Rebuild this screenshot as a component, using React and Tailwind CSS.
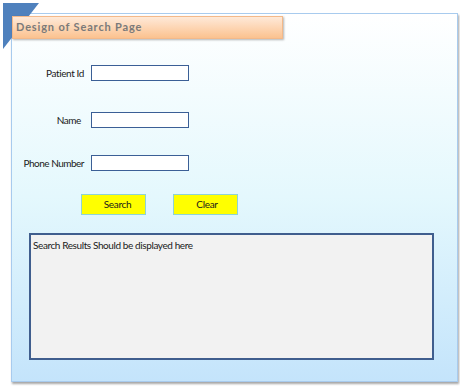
export default function App() {
  const font = { fontFamily: 'Lato, "Liberation Sans", sans-serif' };
  return (
    <div className="relative w-[460px] h-[386px] bg-white overflow-hidden" style={font}>
      <svg className="absolute left-0 top-0 z-10" width="60" height="60" viewBox="0 0 60 60">
        <polygon points="3,3 39,3 3,49" fill="#4f81bd" />
      </svg>
      <div className="relative ml-[11px] mt-[13px] w-[447px] h-[369px] border border-[#a8cbee] bg-gradient-to-b from-white via-[#e4f8fd] to-[#c4e4fb] shadow-[1px_2px_2px_rgba(0,0,0,0.35)] flex flex-col">
        <div className="relative z-20 ml-0 mt-[2px] w-[271px] h-[23px] border border-[#f3b98a] bg-gradient-to-b from-[#fee9d8] to-[#fbc28f] shadow-[1px_1px_2px_rgba(0,0,0,0.3)] flex items-center pl-[3px]">
          <span className="text-[11px] font-bold tracking-[0.85px] text-[#7a7a7a]">Design of Search Page</span>
        </div>
        <div className="mt-[26px] grid grid-cols-[72px_98px] gap-x-[7px] items-center text-[10px] text-[#1a1a1a]">
          <span className="text-right tracking-[-0.4px]">Patient Id</span>
          <div className="h-[16px] border border-[#3b5f96] bg-white" />
          <span className="text-right tracking-[-0.4px] mt-[31px] pr-[3px]">Name</span>
          <div className="h-[16px] border border-[#3b5f96] bg-white mt-[31px]" />
          <span className="text-right tracking-[-0.5px] mt-[27px]">Phone Number</span>
          <div className="h-[16px] border border-[#3b5f96] bg-white mt-[27px]" />
        </div>
        <div className="mt-[23px] ml-[69px] flex gap-[27px] text-[10px] text-[#1a1a1a] tracking-[-0.3px]">
          <div className="w-[65px] h-[21px] bg-[#ffff00] border border-[#8fd3d6] flex items-center justify-center pl-[8px]">Search</div>
          <div className="w-[65px] h-[21px] bg-[#ffff00] border border-[#8fd3d6] flex items-center justify-center pl-[3px]">Clear</div>
        </div>
        <div className="mt-[18px] ml-[17px] w-[405px] h-[127px] border-2 border-[#405e8e] bg-[#f2f2f2] px-[2px] pt-[3px] text-[10px] text-[#1a1a1a] tracking-[-0.4px]">
          Search Results Should be displayed here
        </div>
      </div>
    </div>
  );
}
